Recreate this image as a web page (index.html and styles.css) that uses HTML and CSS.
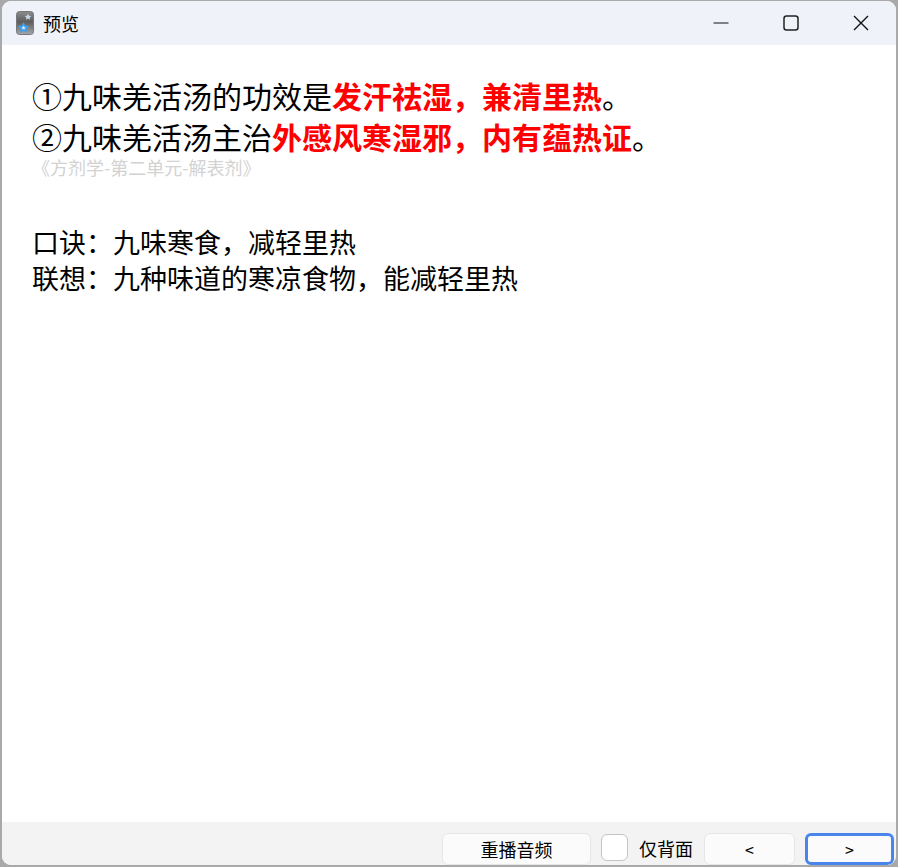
FILE: index.html
```html
<!DOCTYPE html>
<html lang="zh-CN">
<head>
<meta charset="utf-8">
<title>预览</title>
<link rel="stylesheet" href="styles.css">
</head>
<body>
<div class="window">
  <header class="titlebar">
    <div class="title-left">
      <svg class="app-icon" width="18" height="24" viewBox="0 0 18 24">
        <defs><linearGradient id="g" x1="0" y1="0" x2="0" y2="1"><stop offset="0" stop-color="#8c8c8c"/><stop offset=".45" stop-color="#5c5c5c"/><stop offset="1" stop-color="#a8a8a8"/></linearGradient></defs>
        <rect x="0.5" y="0.5" width="17" height="23" rx="3" fill="url(#g)" stroke="#777"/>
        <path d="M12 2.500l1 2.200 2.300.3-1.700 1.500.5 2.300-2.100-1.200-2 1.200.4-2.300L8.700 5l2.300-.3z" fill="#c4d8ee"/>
        <path d="M7.500 11l1.800 3.600 3.900.6-2.800 2.700.7 3.900-3.600-1.900-3.500 1.900.7-3.900-2.900-2.700 4-.6z" fill="#3f9ff0"/>
        <path d="M7.500 14.500l.7 1.500 1.500.2-1.100 1 .3 1.500-1.400-.7-1.300.7.300-1.500-1.100-1 1.500-.2z" fill="#cfe9fc"/>
      </svg>
      <span class="title-text">预览</span>
    </div>
    <div class="controls">
      <span class="ctl"><svg width="16" height="16" viewBox="0 0 16 16"><path d="M.5 8h15" stroke="#111" stroke-width="1" fill="none"/></svg></span>
      <span class="ctl"><svg width="16" height="16" viewBox="0 0 16 16"><rect x="1" y="1" width="14" height="14" rx="2.500" stroke="#222" stroke-width="1.500" fill="none"/></svg></span>
      <span class="ctl"><svg width="16" height="16" viewBox="0 0 16 16"><path d="M1 1l14 14M15 1L1 15" stroke="#111" stroke-width="1.400" fill="none"/></svg></span>
    </div>
  </header>
  <main class="content">
    <p class="answer">①九味羌活汤的功效是<b class="hl">发汗祛湿，兼清里热</b>。</p>
    <p class="answer">②九味羌活汤主治<b class="hl">外感风寒湿邪，内有蕴热证</b>。</p>
    <p class="source">《方剂学-第二单元-解表剂》</p>
    <p class="note first">口诀：九味寒食，减轻里热</p>
    <p class="note">联想：九种味道的寒凉食物，能减轻里热</p>
  </main>
  <footer class="footer">
    <button class="btn replay">重播音频</button>
    <span class="check"></span>
    <span class="check-label">仅背面</span>
    <button class="btn nav">&lt;</button>
    <button class="btn nav focus">&gt;</button>
  </footer>
</div>
</body>
</html>
```
FILE: styles.css
```css
* { box-sizing: border-box; }
html, body { margin: 0; height: 100%; }
body {
  background: #a9a9a9;
  padding: 1px 2px 2px 2px;
  font-family: "Noto Sans CJK SC", "Liberation Sans", sans-serif;
  color: #000;
  overflow: hidden;
}
.window {
  height: 100%;
  display: flex;
  flex-direction: column;
  background: #fff;
  border-radius: 9px;
  overflow: hidden;
}
.titlebar {
  height: 44px;
  flex: none;
  background: #eff3f9;
  display: flex;
  justify-content: space-between;
  align-items: center;
}
.title-left { display: flex; align-items: center; padding-left: 14px; }
.app-icon { display: block; }
.title-text { margin-left: 9px; font-size: 18px; }
.controls { display: flex; }
.ctl { width: 70px; height: 44px; display: flex; align-items: center; justify-content: center; }
.content { flex: 1; padding: 30px 0 0 30px; }
.content p { margin: 0; white-space: nowrap; }
.answer { font-size: 30px; line-height: 41px; }
.hl { color: #f00; font-weight: 700; }
.content .source { font-size: 18px; line-height: 24px; color: #d2d2d2; margin-top: -2px; }
.note { font-size: 27px; line-height: 36px; }
.content .note.first { margin-top: 45px; }
.footer {
  height: 43px;
  flex: none;
  background: #f3f3f3;
  display: flex;
  align-items: flex-start;
  padding: 11px 0 0 440px;
}
.btn {
  height: 32px;
  background: #fbfbfb;
  border: 1px solid #e6e6e6;
  border-radius: 6px;
  font-family: inherit;
  font-size: 18px;
  color: #000;
  padding: 0;
}
.replay { width: 149px; }
.check {
  width: 27px;
  height: 27px;
  margin: 1px 0 0 10px;
  background: #fff;
  border: 1px solid #c4c4c4;
  border-radius: 6px;
}
.check-label { font-size: 18px; margin: 2px 0 0 11px; line-height: 26px; }
.nav { width: 91px; margin-left: 11px; font-size: 16px; }
.nav.focus { border: 3px solid #4a85ee; width: 89px; margin-left: 10px; }
```
